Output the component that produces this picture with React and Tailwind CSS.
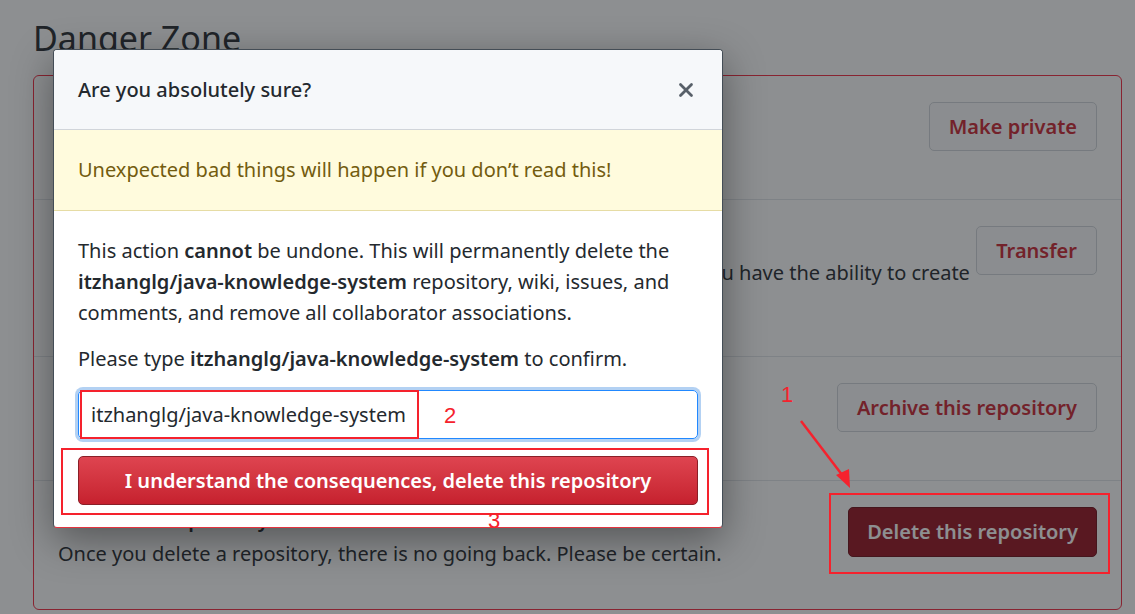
import { X } from 'lucide-react'

const rows = [
  {
    title: 'Change repository visibility',
    text: 'This repository is currently public.',
    button: 'Make private',
    h: 'h-[124px] border-b',
  },
  {
    title: 'Transfer ownership',
    text: (
      <>
        Transfer this repository to another user or to an organization where you have the ability to create
        <br />
        repositories.
      </>
    ),
    button: 'Transfer',
    h: 'h-[157px] border-b',
  },
  {
    title: 'Archive this repository',
    text: 'Mark this repository as archived and read-only.',
    button: 'Archive this repository',
    h: 'h-[124px] border-b',
  },
  {
    title: 'Delete this repository',
    text: 'Once you delete a repository, there is no going back. Please be certain.',
    button: 'Delete this repository',
    h: 'h-[128px]',
    danger: true,
  },
]

function DangerRow({ title, text, button, h, danger }) {
  return (
    <div className={`flex items-start justify-between border-[#e1e4e8] px-6 pt-[26px] ${h}`}>
      <div className="text-[20px] leading-[31px] text-[#24292e]">
        <p className={`font-semibold ${danger ? 'leading-[25px]' : ''}`}>{title}</p>
        <p className={danger ? 'mt-[6px]' : ''}>{text}</p>
      </div>
      {danger ? (
        <button className="h-[50px] shrink-0 rounded-[5px] border border-[#6e0d16] bg-[#97101f] px-[18px] text-[20px] font-semibold text-white">
          {button}
        </button>
      ) : (
        <button className="h-[49px] shrink-0 rounded-[5px] border border-[#d1d5da] bg-[#fafbfc] px-[19px] text-[20px] font-semibold text-[#cb2431]">
          {button}
        </button>
      )}
    </div>
  )
}

function Annotations() {
  return (
    <div className="pointer-events-none absolute inset-0 z-30 text-[22px] leading-none text-[#f5222d]" style={{ fontFamily: '"Liberation Sans", sans-serif' }}>
      <div className="absolute left-[80px] top-[390px] h-[49px] w-[339px] border-2 border-[#f5222d]" />
      <span className="absolute left-[444px] top-[405px]">2</span>
      <div className="absolute left-[61px] top-[448px] h-[67px] w-[648px] border-2 border-[#f5222d]" />
      <span className="absolute left-[488px] top-[510px]">3</span>
      <span className="absolute left-[781px] top-[384px]">1</span>
      <div className="absolute left-[829px] top-[493px] h-[81px] w-[281px] border-2 border-[#f5222d]" />
      <svg className="absolute left-0 top-0" width="1135" height="614">
        <line x1="801" y1="421" x2="846" y2="480" stroke="#f5222d" strokeWidth="2.5" />
        <polygon points="850,488 836,475 849,469" fill="#f5222d" />
      </svg>
    </div>
  )
}

export default function App() {
  return (
    <div
      className="relative h-[614px] w-[1135px] overflow-hidden bg-white"
      style={{ fontFamily: '"Noto Sans", "Open Sans", sans-serif' }}
    >
      {/* page under the overlay */}
      <div className="pl-[33px] pr-[13px] pt-[14px]">
        <h2 className="mb-[13px] text-[34px] font-normal leading-[48px] text-[#24292e]">Danger Zone</h2>
        <div className="rounded-[6px] border border-[#f5283f]">
          {rows.map((r) => (
            <DangerRow key={r.button} {...r} />
          ))}
        </div>
      </div>

      <div className="absolute inset-0 bg-[rgba(27,31,35,0.5)]" />

      {/* modal */}
      <div className="absolute left-[53px] top-[49px] z-20 w-[670px] overflow-hidden rounded-[4px] border border-[#444d56] border-b-[#e5343f] bg-white shadow-[0_12px_40px_rgba(0,0,0,0.4)]">
        <div className="flex h-[80px] items-center justify-between border-b border-[#d1d5da] bg-[#f6f8fa] pl-6 pr-[25px]">
          <h3 className="text-[20px] font-medium text-[#24292e]">Are you absolutely sure?</h3>
          <X size={22} strokeWidth={3} className="text-[#586069]" />
        </div>
        <div className="flex h-[81px] items-center border-b border-[#e6dca4] bg-[#fffbdd] px-6 text-[20px] text-[#735c0f]">
          Unexpected bad things will happen if you don’t read this!
        </div>
        <div className="px-6 pb-[22px] pt-[24px] text-[20px] leading-[31px] text-[#24292e]">
          <p>
            This action <b className="font-semibold">cannot</b> be undone. This will permanently delete the{' '}
            <b className="font-semibold">itzhanglg/java-knowledge-system</b> repository, wiki, issues, and comments, and
            remove all collaborator associations.
          </p>
          <p className="mt-[15px]">
            Please type <b className="font-semibold">itzhanglg/java-knowledge-system</b> to confirm.
          </p>
          <div className="mt-[16px] flex h-[49px] items-center rounded-[5px] border border-[#2188ff] pl-[12px] shadow-[0_0_0_3px_rgba(3,102,214,0.3)]">
            itzhanglg/java-knowledge-system
          </div>
          <button className="mt-[17px] h-[49px] w-full rounded-[5px] border border-[#8a1f27] bg-gradient-to-b from-[#de4450] to-[#c6202e] text-[20px] font-semibold text-white">
            I understand the consequences, delete this repository
          </button>
        </div>
      </div>

      <Annotations />
    </div>
  )
}
